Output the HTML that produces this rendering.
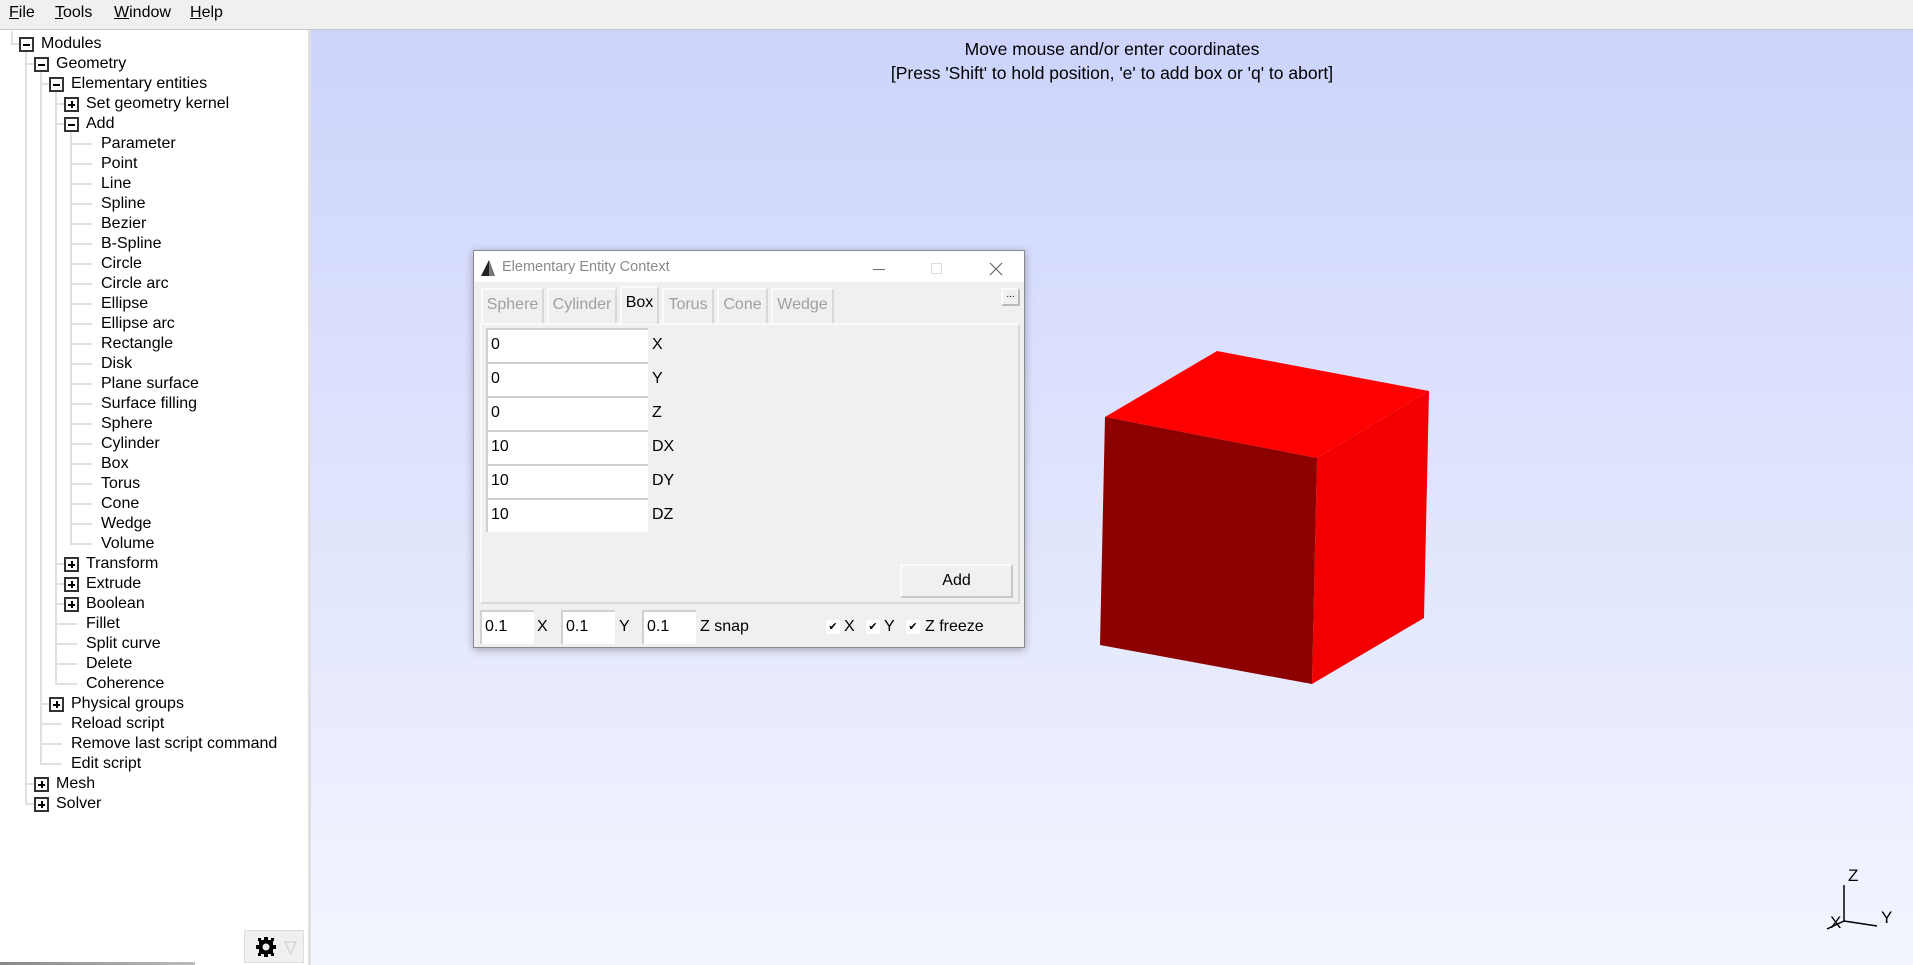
<!DOCTYPE html>
<html><head><meta charset="utf-8"><style>
*{margin:0;padding:0;box-sizing:border-box}
body{width:1913px;height:965px;overflow:hidden;position:relative;font-family:"Liberation Sans",Arial,sans-serif;background:#fff}
.a{position:absolute}
#menu{left:0;top:0;width:1913px;height:30px;background:#f0f0f0;border-bottom:1px solid #c8c8c8;font-size:16px}
#menu span{position:absolute;top:4px}
#tree{left:0;top:30px;width:308px;height:935px;background:#fff}
#div{left:308px;top:30px;width:3px;height:935px;background:#e0e0e0}
#view{left:311px;top:30px;width:1602px;height:935px;background:linear-gradient(#cdd4fc,#f3f5fe)}
.t{position:absolute;font-size:16px;line-height:20px;color:#000;white-space:nowrap}
.v{position:absolute;width:2px;background:#e0e0e0}
.h{position:absolute;height:2px;background:#e0e0e0}
.b{position:absolute;width:15px;height:15px;border:2px solid #333;background:#fff}
.b::before{content:"";position:absolute;left:2px;top:4.5px;width:7px;height:2px;background:#000}
.p::after{content:"";position:absolute;left:4.5px;top:2px;width:2px;height:7px;background:#000}
#dlg{left:473px;top:250px;width:552px;height:398px;background:#f0f0f0;border:1px solid #8a8a8a;box-shadow:0 2px 8px rgba(0,0,0,.3)}
.tab{position:absolute;top:37px;height:35px;border:2px solid #fafafa;border-bottom:none;border-right-color:#d8d8d8;color:#a0a0a0;font-size:16px;line-height:30px;text-align:center}
.in{position:absolute;background:#fff;border-top:2px solid #d0d0d0;border-left:2px solid #d0d0d0;font-size:16px;line-height:30px;padding-left:3px}
.lb{position:absolute;font-size:16px}
.cb{position:absolute;width:14px;height:14px;background:#fff;font-size:11px;line-height:14px;text-align:center}
</style></head><body>
<div id="menu" class="a"><span style="left:9px"><u>F</u>ile</span><span style="left:55px"><u>T</u>ools</span><span style="left:114px"><u>W</u>indow</span><span style="left:190px"><u>H</u>elp</span></div>
<div id="tree" class="a"></div>
<div id="div" class="a"></div>
<div id="view" class="a"></div>

<div class="v" style="left:11px;top:31px;height:14px"></div>
<div class="h" style="left:11px;top:43px;width:9px"></div>
<div class="v" style="left:25px;top:52px;height:752px"></div>
<div class="v" style="left:40px;top:72px;height:692px"></div>
<div class="v" style="left:55px;top:92px;height:592px"></div>
<div class="v" style="left:70px;top:132px;height:412px"></div>
<div class="h" style="left:25px;top:63px;width:10px"></div>
<div class="h" style="left:25px;top:783px;width:10px"></div>
<div class="h" style="left:25px;top:803px;width:10px"></div>
<div class="h" style="left:40px;top:83px;width:10px"></div>
<div class="h" style="left:40px;top:703px;width:10px"></div>
<div class="h" style="left:40px;top:723px;width:22px"></div>
<div class="h" style="left:40px;top:743px;width:22px"></div>
<div class="h" style="left:40px;top:763px;width:22px"></div>
<div class="h" style="left:55px;top:103px;width:10px"></div>
<div class="h" style="left:55px;top:123px;width:10px"></div>
<div class="h" style="left:55px;top:563px;width:10px"></div>
<div class="h" style="left:55px;top:583px;width:10px"></div>
<div class="h" style="left:55px;top:603px;width:10px"></div>
<div class="h" style="left:55px;top:623px;width:22px"></div>
<div class="h" style="left:55px;top:643px;width:22px"></div>
<div class="h" style="left:55px;top:663px;width:22px"></div>
<div class="h" style="left:55px;top:683px;width:22px"></div>
<div class="h" style="left:70px;top:143px;width:22px"></div>
<div class="h" style="left:70px;top:163px;width:22px"></div>
<div class="h" style="left:70px;top:183px;width:22px"></div>
<div class="h" style="left:70px;top:203px;width:22px"></div>
<div class="h" style="left:70px;top:223px;width:22px"></div>
<div class="h" style="left:70px;top:243px;width:22px"></div>
<div class="h" style="left:70px;top:263px;width:22px"></div>
<div class="h" style="left:70px;top:283px;width:22px"></div>
<div class="h" style="left:70px;top:303px;width:22px"></div>
<div class="h" style="left:70px;top:323px;width:22px"></div>
<div class="h" style="left:70px;top:343px;width:22px"></div>
<div class="h" style="left:70px;top:363px;width:22px"></div>
<div class="h" style="left:70px;top:383px;width:22px"></div>
<div class="h" style="left:70px;top:403px;width:22px"></div>
<div class="h" style="left:70px;top:423px;width:22px"></div>
<div class="h" style="left:70px;top:443px;width:22px"></div>
<div class="h" style="left:70px;top:463px;width:22px"></div>
<div class="h" style="left:70px;top:483px;width:22px"></div>
<div class="h" style="left:70px;top:503px;width:22px"></div>
<div class="h" style="left:70px;top:523px;width:22px"></div>
<div class="h" style="left:70px;top:543px;width:22px"></div>

<div class="b" style="left:19px;top:37px"></div>
<div class="b" style="left:34px;top:57px"></div>
<div class="b" style="left:49px;top:77px"></div>
<div class="b p" style="left:64px;top:97px"></div>
<div class="b" style="left:64px;top:117px"></div>
<div class="b p" style="left:64px;top:557px"></div>
<div class="b p" style="left:64px;top:577px"></div>
<div class="b p" style="left:64px;top:597px"></div>
<div class="b p" style="left:49px;top:697px"></div>
<div class="b p" style="left:34px;top:777px"></div>
<div class="b p" style="left:34px;top:797px"></div>

<div class="t" style="left:41px;top:34px">Modules</div>
<div class="t" style="left:56px;top:54px">Geometry</div>
<div class="t" style="left:71px;top:74px">Elementary entities</div>
<div class="t" style="left:86px;top:94px">Set geometry kernel</div>
<div class="t" style="left:86px;top:114px">Add</div>
<div class="t" style="left:101px;top:134px">Parameter</div>
<div class="t" style="left:101px;top:154px">Point</div>
<div class="t" style="left:101px;top:174px">Line</div>
<div class="t" style="left:101px;top:194px">Spline</div>
<div class="t" style="left:101px;top:214px">Bezier</div>
<div class="t" style="left:101px;top:234px">B-Spline</div>
<div class="t" style="left:101px;top:254px">Circle</div>
<div class="t" style="left:101px;top:274px">Circle arc</div>
<div class="t" style="left:101px;top:294px">Ellipse</div>
<div class="t" style="left:101px;top:314px">Ellipse arc</div>
<div class="t" style="left:101px;top:334px">Rectangle</div>
<div class="t" style="left:101px;top:354px">Disk</div>
<div class="t" style="left:101px;top:374px">Plane surface</div>
<div class="t" style="left:101px;top:394px">Surface filling</div>
<div class="t" style="left:101px;top:414px">Sphere</div>
<div class="t" style="left:101px;top:434px">Cylinder</div>
<div class="t" style="left:101px;top:454px">Box</div>
<div class="t" style="left:101px;top:474px">Torus</div>
<div class="t" style="left:101px;top:494px">Cone</div>
<div class="t" style="left:101px;top:514px">Wedge</div>
<div class="t" style="left:101px;top:534px">Volume</div>
<div class="t" style="left:86px;top:554px">Transform</div>
<div class="t" style="left:86px;top:574px">Extrude</div>
<div class="t" style="left:86px;top:594px">Boolean</div>
<div class="t" style="left:86px;top:614px">Fillet</div>
<div class="t" style="left:86px;top:634px">Split curve</div>
<div class="t" style="left:86px;top:654px">Delete</div>
<div class="t" style="left:86px;top:674px">Coherence</div>
<div class="t" style="left:71px;top:694px">Physical groups</div>
<div class="t" style="left:71px;top:714px">Reload script</div>
<div class="t" style="left:71px;top:734px">Remove last script command</div>
<div class="t" style="left:71px;top:754px">Edit script</div>
<div class="t" style="left:56px;top:774px">Mesh</div>
<div class="t" style="left:56px;top:794px">Solver</div>

<div class="a" style="left:244px;top:930px;width:60px;height:33px;background:#f0f0f0;border:1px solid #ddd"></div>
<svg class="a" style="left:254px;top:935px" width="44" height="24" viewBox="0 0 44 24">
<g fill="#000"><rect x="5" y="5" width="14" height="14"/><rect x="10" y="2" width="4" height="20"/><rect x="2" y="10" width="20" height="4"/><rect x="4" y="3" width="3" height="3"/><rect x="17" y="3" width="3" height="3"/><rect x="4" y="18" width="3" height="3"/><rect x="17" y="18" width="3" height="3"/></g>
<circle cx="12" cy="12" r="3.5" fill="#f0f0f0"/>
<path d="M31 7 L42 7 L36.5 19 Z" fill="none" stroke="#ccc"/>
</svg>
<div class="a" style="left:0;top:962px;width:195px;height:3px;background:linear-gradient(90deg,#888,#bbb)"></div>

<div class="a" style="left:311px;top:37px;width:1602px;text-align:center;font-size:17.5px;line-height:24px;color:#000">Move mouse and/or enter coordinates<br>[Press 'Shift' to hold position, 'e' to add box or 'q' to abort]</div>

<svg class="a" style="left:0;top:0" width="1913" height="965">
<polygon points="1217,351 1429,391 1317,458 1105,417" fill="#ff0000"/>
<polygon points="1317,458 1429,391 1424,618 1312,684" fill="#f20000"/>
<polygon points="1105,417 1317,458 1312,684 1100,645" fill="#8c0000"/>
<g stroke="#000" stroke-width="1.5"><line x1="1844" y1="885" x2="1844" y2="921"/><line x1="1844" y1="921" x2="1877" y2="926"/><line x1="1844" y1="921" x2="1827" y2="929"/></g>
<g font-family="Liberation Sans" font-size="17" fill="#000"><text x="1848" y="881">Z</text><text x="1881" y="923">Y</text><text x="1830" y="928">X</text></g>
</svg>

<div id="dlg" class="a">
<div class="a" style="left:0;top:0;width:550px;height:31px;background:#fff"></div>
<svg class="a" style="left:6px;top:8px" width="16" height="18"><polygon points="9,1 15,17 1,17" fill="#222"/><polygon points="9,1 15,17 9,17" fill="#777"/></svg>
<div class="a" style="left:28px;top:8px;font-size:14.5px;color:#8a8a8a">Elementary Entity Context</div>
<div class="a" style="left:399px;top:18px;width:12px;height:1px;background:#666"></div>
<div class="a" style="left:457px;top:12px;width:11px;height:11px;border:1px solid #ddd"></div>
<svg class="a" style="left:515px;top:11px" width="14" height="14"><path d="M1 1L13 13M13 1L1 13" stroke="#666" stroke-width="1.2"/></svg>
<div class="tab" style="left:7px;width:63px">Sphere</div>
<div class="tab" style="left:73px;width:70px">Cylinder</div>
<div class="tab" style="left:146px;top:35px;height:38px;width:39px;color:#000;background:#f0f0f0;z-index:2">Box</div>
<div class="tab" style="left:188px;width:52px">Torus</div>
<div class="tab" style="left:243px;width:51px">Cone</div>
<div class="tab" style="left:297px;width:63px">Wedge</div>
<div class="a" style="left:527px;top:37px;width:19px;height:18px;border:2px solid #fafafa;border-right-color:#bbb;border-bottom-color:#bbb;font-size:10px;line-height:10px;text-align:center">...</div>
<div class="a" style="left:6px;top:72px;width:540px;height:281px;border:2px solid #fafafa;border-right-color:#d8d8d8;border-bottom-color:#d8d8d8"></div>
<div class="in" style="left:12px;top:77px;width:162px;height:34px">0</div>
<div class="in" style="left:12px;top:111px;width:162px;height:34px">0</div>
<div class="in" style="left:12px;top:145px;width:162px;height:34px">0</div>
<div class="in" style="left:12px;top:179px;width:162px;height:34px">10</div>
<div class="in" style="left:12px;top:213px;width:162px;height:34px">10</div>
<div class="in" style="left:12px;top:247px;width:162px;height:34px">10</div>
<div class="lb" style="left:178px;top:85px">X</div>
<div class="lb" style="left:178px;top:119px">Y</div>
<div class="lb" style="left:178px;top:153px">Z</div>
<div class="lb" style="left:178px;top:187px">DX</div>
<div class="lb" style="left:178px;top:221px">DY</div>
<div class="lb" style="left:178px;top:255px">DZ</div>
<div class="a" style="left:426px;top:313px;width:113px;height:34px;border:2px solid #fafafa;border-right-color:#c8c8c8;border-bottom-color:#c8c8c8;font-size:16px;line-height:30px;text-align:center">Add</div>
<div class="in" style="left:6px;top:359px;width:54px;height:34px">0.1</div>
<div class="in" style="left:87px;top:359px;width:54px;height:34px">0.1</div>
<div class="in" style="left:168px;top:359px;width:54px;height:34px">0.1</div>
<div class="lb" style="left:63px;top:367px">X</div>
<div class="lb" style="left:145px;top:367px">Y</div>
<div class="lb" style="left:226px;top:367px">Z snap</div>
<div class="cb" style="left:352px;top:369px">✔</div><div class="lb" style="left:370px;top:367px">X</div>
<div class="cb" style="left:392px;top:369px">✔</div><div class="lb" style="left:410px;top:367px">Y</div>
<div class="cb" style="left:432px;top:369px">✔</div><div class="lb" style="left:451px;top:367px">Z freeze</div>
</div>
</body></html>
